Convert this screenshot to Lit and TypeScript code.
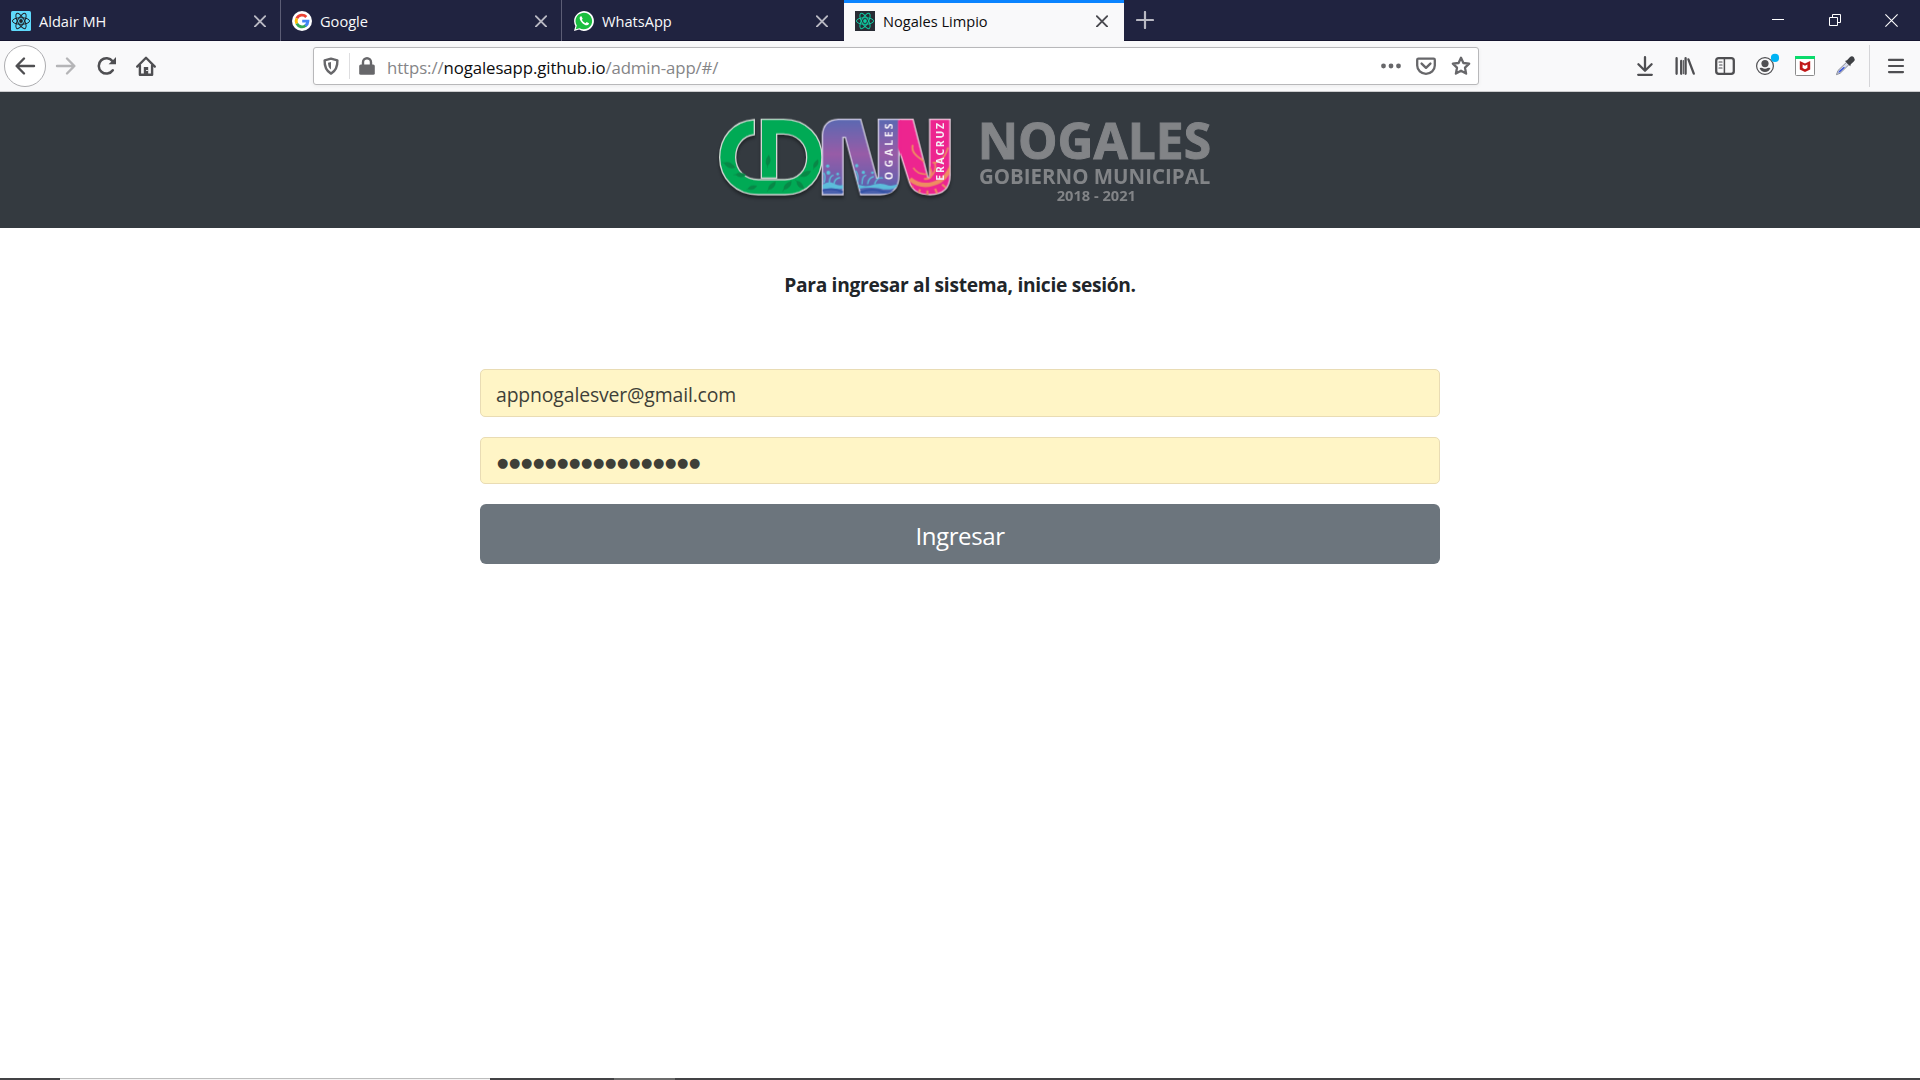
import { LitElement, html, css, svg } from "lit";
import { customElement, property } from "lit/decorators.js";

const atom = (color: string, bg: string, radius: number) => svg`
  <rect width="20" height="20" rx=${radius} fill=${bg}></rect>
  <g fill="none" stroke=${color} stroke-width="1">
    <ellipse cx="10" cy="10" rx="8.6" ry="3.3"></ellipse>
    <ellipse cx="10" cy="10" rx="8.6" ry="3.3" transform="rotate(60 10 10)"></ellipse>
    <ellipse cx="10" cy="10" rx="8.6" ry="3.3" transform="rotate(120 10 10)"></ellipse>
  </g>
  <circle cx="10" cy="10" r="1.9" fill=${color}></circle>`;

const favicons: Record<string, unknown> = {
  aldair: atom("#20232a", "#5fd9fb", 1.5),
  nogales: atom("#0fc9a0", "#282c34", 0),
  google: svg`
    <circle cx="10" cy="10" r="10" fill="#fff"></circle>
    <g fill="none" stroke-width="2.9">
      <path d="M14.3 5.9 A5.9 5.9 0 0 0 4.8 7.3" stroke="#ea4335"></path>
      <path d="M4.8 7.3 A5.9 5.9 0 0 0 4.8 12.7" stroke="#fbbc05"></path>
      <path d="M4.8 12.7 A5.9 5.9 0 0 0 13.8 14.5" stroke="#34a853"></path>
      <path d="M10.2 10.1 H15.9 A5.9 5.9 0 0 1 13.4 14.8" stroke="#4285f4"></path>
    </g>`,
  whatsapp: svg`
    <path d="M0 20 L1.4 14.9 A9.9 9.9 0 1 1 5.1 18.6 Z" fill="#fff"></path>
    <path d="M1.7 18.3 L2.8 14.5 A8.3 8.3 0 1 1 5.6 17.2 Z" fill="#1bbf3f"></path>
    <path d="M7.6 5.4 C7 5 6 5.6 5.7 6.7 C5.2 9.3 9.5 14.3 13 14.3 C14.2 14.2 15.1 13.3 15 12.3 L12.7 11 L11.5 12.2 C9.8 11.5 8.5 10.2 7.9 8.8 L8.7 7.7 Z" fill="#fff"></path>`,
};

const icons: Record<string, unknown> = {
  back: svg`<path d="M19 10 H1.8 M9 2.5 L1.6 10 L9 17.5" stroke-width="2.4"></path>`,
  forward: svg`<path d="M1 10 H18.2 M11 2.5 L18.4 10 L11 17.5" stroke-width="2.4"></path>`,
  reload: svg`<path d="M15.8 14.2 A7.7 7.7 0 1 1 15.6 5.2" stroke-width="2.5"></path>
    <path d="M19 1 V8.2 H11.6 L15 5 L17.6 2.4 Z" fill="currentColor" stroke="none"></path>`,
  home: svg`<path d="M1.2 10.6 L10 1.8 L18.8 10.6" stroke-width="2.3"></path>
    <path d="M3.9 9.5 V18.7 H16.1 V9.5" stroke-width="2.4"></path>
    <path d="M7.8 18 V11 H12.2 V18 Z" fill="currentColor" stroke="none"></path><path d="M10.6 14.5 h.8" stroke="#f9f9fa" stroke-width="1.2"></path>`,
  shield: svg`<path d="M10 2.6 L16.4 4.3 C16.6 10.8 14.8 15 10 17.6 C5.2 15 3.4 10.8 3.6 4.3 Z" stroke-width="2.4"></path>
    <path d="M10 6 V13.6 C7.8 12 7 9.6 7 6.7 Z" fill="currentColor" stroke="none"></path>`,
  lock: svg`<path d="M6 9 V6.3 a4 4 0 0 1 8 0 V9" stroke-width="2.4"></path>
    <rect x="2.2" y="8.4" width="15.6" height="10.4" rx="1.6" fill="currentColor" stroke="none"></rect>`,
  dots: svg`<g fill="currentColor" stroke="none"><circle cx="2.5" cy="10" r="2.4"></circle><circle cx="10" cy="10" r="2.4"></circle><circle cx="17.5" cy="10" r="2.4"></circle></g>`,
  pocket: svg`<path d="M2.4 2.6 H17.6 a1.2 1.2 0 0 1 1.2 1.2 V9.5 a8.8 8.3 0 0 1 -17.6 0 V3.8 a1.2 1.2 0 0 1 1.2 -1.2 Z" stroke-width="2.3"></path>
    <path d="M5.6 7.6 L10 11.8 L14.4 7.6" stroke-width="2.4"></path>`,
  star: svg`<path d="M10 1.8 L12.4 7 L18.2 7.7 L14 11.7 L15.1 17.6 L10 14.7 L4.9 17.6 L6 11.7 L1.8 7.7 L7.6 7 Z" stroke-width="2.3"></path>`,
  download: svg`<path d="M10 1.2 V14.4 M3.4 8.2 L10 14.8 L16.6 8.2 M3.2 18.8 H16.8" stroke-width="2.3"></path>`,
  library: svg`<path d="M1.6 2.2 V17.8 M6.2 5 V17.8 M10.6 2.2 V17.8 M13.4 3.4 L18.8 17.6" stroke-width="2.3"></path><path d="M8.4 4.5 V17.8" stroke-width="1"></path>`,
  sidebar: svg`<rect x="1.2" y="2.2" width="17.6" height="15.6" rx="2.6" stroke-width="2.3"></rect>
    <path d="M9.4 2.5 V17.5" stroke-width="1.5"></path><path d="M4 6 H7 M4.6 9 H7 M4 12 H7" stroke-width="1.2"></path>`,
  account: svg`<circle cx="10" cy="10" r="8.4" stroke-width="1.2"></circle>
    <g fill="currentColor" stroke="none"><circle cx="10" cy="7.6" r="3.6"></circle><path d="M4.6 12 Q7 11.2 8 12.2 Q10 13.4 12 12.2 Q13 11.2 15.4 12 Q14 16 10 16 Q6 16 4.6 12 Z"></path></g>
    <circle cx="20" cy="1.9" r="4.1" fill="#00b3f4" stroke="none"></circle>`,
  mcafee: svg`<rect x=".5" y=".5" width="19" height="19" rx="1" fill="#fff" stroke="#8c8c8c" stroke-width="1"></rect>
    <rect width="20" height="3" fill="#0bdb6c" stroke="none"></rect>
    <path d="M4.8 5 L10 7.6 L15.2 5 V13.4 L10 16 L4.8 13.4 Z" stroke="none" fill="#c01818"></path><path d="M7.6 8.6 L10 9.8 L12.4 8.6 V12.1 L10 13.3 L7.6 12.1 Z" stroke="none" fill="#fff"></path>`,
  dropper: svg`<path d="M1.6 18.3 L3 14.5 L11.5 6.3 L13.9 8.7 L5.4 17 Z" fill="#d5d9e8" stroke="#8a8d98" stroke-width="1"></path>
    <path d="M3.2 16.8 L4 14.9 L8.6 11 L10 11.6 L5 16.2 Z" fill="#3553d8" stroke="none"></path>
    <path d="M10 5 L12 4.3 L14.8 1.3 Q17 -.6 19 1.4 Q20.6 3.6 18.8 5.6 L15.8 8.2 L15.2 10.2 Z" fill="#3f4145" stroke="none"></path>`,
  menu: svg`<path d="M3 3.9 H17 M3 10 H17 M3 16.1 H17" stroke-width="2.2"></path>`,
};

@customElement("nav-icon")
class NavIcon extends LitElement {
  @property() name = "";
  static styles = css`
    :host { display: block; width: 20px; height: 20px; flex: none; }
    .icon { display: block; overflow: visible; fill: none; stroke: currentColor; stroke-linecap: round; stroke-linejoin: round; }
  `;
  render() {
    return html`<svg class="icon" width="20" height="20" viewBox="0 0 20 20">${icons[this.name]}</svg>`;
  }
}

@customElement("browser-tab")
class BrowserTab extends LitElement {
  @property() icon = "";
  @property() label = "";
  static styles = css`
    :host { display: flex; box-sizing: border-box; align-items: center; width: 281px; height: 41px; padding: 1px 14px 0 11px; color: #f9f9fa; border-right: 1px solid #5c5d75; border-bottom: 0; font: 14.6px "Open Sans", sans-serif; letter-spacing: 0; }
    :host([last]) { border-right-color: transparent; width: 282px; padding: 1px 15px 0 12px; }
    :host([active]) { color: #0c0c0d; background: #f9f9fa; box-shadow: inset 0 3px #0a84ff; border-right: 0; width: 280px; padding-right: 16px; }
    .fav { display: block; flex: none; }
    .label { flex: 1; padding: 0 0 1px 8px; line-height: 20px; white-space: nowrap; }
    .x { display: block; color: #b9b9c3; }
    :host([active]) .x { color: #4a4a4f; }
  `;
  render() {
    return html`<svg class="fav" width="20" height="20" viewBox="0 0 20 20">${favicons[this.icon]}</svg>
      <span class="label">${this.label}</span>
      <svg class="x" width="12" height="12" viewBox="0 0 12 12"><path d="M.8 1.2 L11.2 11.6 M11.2 1.2 L.8 11.6" stroke="currentColor" stroke-width="1.9" stroke-linecap="round"></path></svg>`;
  }
}

@customElement("nogales-logo")
class NogalesLogo extends LitElement {
  static styles = css`
    :host { display: block; width: 540px; height: 136px; }
    .logo { display: block; }
    .words { font-family: "Open Sans", sans-serif; font-weight: 700; fill: #828487; }
    .side { font-family: "Open Sans", sans-serif; font-weight: 700; fill: #f4eef6; font-size: 31px; }
    .name { stroke: #828487; stroke-width: 3; }
    .shadow { filter: drop-shadow(0 8px 5px rgba(0, 0, 0, 0.4)); }
  `;
  render() {
    const leaf = (x: number, y: number, r: number, s = 1) => svg`<path transform="translate(${x} ${y}) rotate(${r}) scale(${s})" d="M-19 0 Q-5 -15 20 -2 Q2 15 -19 0 Z M-19 0 L-27 2"></path>`;
    return html`<svg class="logo" width="540" height="136" viewBox="0 -9 1620 408">
      <defs>
        <linearGradient id="violet" x1="0" y1="73" x2="0" y2="299" gradientUnits="userSpaceOnUse">
          <stop offset="0" stop-color="#5b69b2"></stop><stop offset=".46" stop-color="#985ca7"></stop><stop offset=".8" stop-color="#6e60ad"></stop><stop offset="1" stop-color="#4361ae"></stop>
        </linearGradient>
        <clipPath id="nClip"><path d="M367 299 V120 Q370 75 415 73 H482 L530 249 H535 V73 H597 V240 Q597 299 540 299 H482 L436 127 H429 V299 Z"></path></clipPath>
        <clipPath id="vClip"><path d="M597 73 H639 L684 249 H689 V73 H750 V240 Q750 299 690 299 Q640 299 628 262 L597 163 Z"></path></clipPath>
      </defs>
      <g class="shadow">
        <path d="M163 74 C98 78 59 128 59 187 C59 250 107 299 175 299 H255 C322 299 366 250 366 187 C366 122 320 73 250 73 H184 V249 H230 V117 H250 C290 117 320 145 320 187 C320 225 294 254 255 254 H175 C135 254 107 225 107 187 C107 150 130 122 163 119 Z" fill="#00aa55" stroke="#d3d9d5" stroke-width="4"></path>
        <g fill="#098747" stroke="#098747" stroke-width="2">
          ${leaf(88, 211, 25, .9)}${leaf(122, 240, 5, .8)}${leaf(157, 278, -15, .7)}${leaf(205, 197, -80, .8)}${leaf(216, 273, -45, .8)}${leaf(263, 272, -45, .85)}${leaf(300, 270, 50, .8)}${leaf(317, 237, -25, .85)}${leaf(348, 207, -60, .7)}
        </g>
        <path d="M597 73 H639 L684 249 H689 V73 H750 V240 Q750 299 690 299 Q640 299 628 262 L597 163 Z" fill="#ed258f" stroke="#eed3e1" stroke-width="4"></path>
        <g clip-path="url(#vClip)" fill="none" stroke="#ee8c62">
          <path d="M630 252 Q668 284 720 258 Q742 243 755 212" stroke-width="13"></path>
          <path d="M638 150 C630 185 676 190 690 220 Q704 252 672 252" stroke-width="6"></path>
          <path d="M697 203 Q730 205 744 157 M690 246 Q712 228 704 202 M690 238 Q650 240 640 218" stroke-width="5"></path>
          <path d="M638 273 l-9 12 M660 283 l-5 14 M682 286 v14 M705 281 l6 14 M726 268 l12 10" stroke-width="6"></path>
        </g>
        <path d="M367 299 V120 Q370 75 415 73 H482 L530 249 H535 V73 H597 V240 Q597 299 540 299 H482 L436 127 H429 V299 Z" fill="url(#violet)" stroke="#d6d1e5" stroke-width="4"></path>
        <path d="M594 75.500 H603 V185 L594 158 Z" fill="#ed258f"></path>
        <g clip-path="url(#nClip)">
          <path d="M367 270 Q384 256 401 265 Q420 275 430 268 V281 Q400 286 367 281 Z M466 260 Q479 277 510 272 Q540 260 565 271 Q585 275 600 262 V272 Q570 290 538 280 Q510 275 473 282 Z" fill="#5cbddb"></path>
          <path d="M367 287 Q400 276 430 292 M478 293 Q515 277 548 290 Q573 296 597 284" fill="none" stroke="#3452a5" stroke-width="6"></path>
          <path d="M372 262 Q378 244 371 234 M388 262 Q388 245 399 241 M402 265 Q405 250 419 248 M472 262 Q477 240 467 228 M486 266 Q486 244 497 241 M503 266 Q506 248 520 245 M524 266 Q532 246 547 249" fill="none" stroke="#5ac5dd" stroke-width="4" stroke-linecap="round"></path>
          <g fill="#5ac5dd"><circle cx="383" cy="213" r="5"></circle><circle cx="385" cy="233" r="6"></circle><circle cx="470" cy="212" r="5"></circle><circle cx="490" cy="232" r="5"></circle><circle cx="517" cy="233" r="4"></circle><circle cx="413" cy="237" r="4"></circle></g>
        </g>
      </g>
      <text class="side" transform="translate(578 255) rotate(-90)" x="0 38 72 103 128 152">OGALES</text>
      <text class="side" transform="translate(731 257) rotate(-90)" textLength="173">ERACRUZ</text>
      <g class="words">
        <text class="name" x="833" y="192" font-size="150" textLength="700" lengthAdjust="spacingAndGlyphs">NOGALES</text>
        <text x="837" y="267" font-size="66" textLength="694" lengthAdjust="spacingAndGlyphs">GOBIERNO MUNICIPAL</text>
        <text x="1070" y="317" font-size="44" textLength="238" lengthAdjust="spacingAndGlyphs">2018 - 2021</text>
      </g>
    </svg>`;
  }
}

@customElement("app-root")
class AppRoot extends LitElement {
  static styles = css`
    :host { display: flex; flex-direction: column; width: 1920px; height: 1080px; overflow: hidden; background: #fff; font-family: "Open Sans", sans-serif; }
    .tabs { display: flex; height: 41px; flex: none; background: linear-gradient(#202340 40px, #15152f 40px); }
    .plus { display: block; margin: 11px 0 0 12px; }
    .window { display: flex; margin-left: auto; padding: 14px 22px 0 0; gap: 44px; }
    .minimize { margin-right: 1px; }
    .toolbar { display: flex; box-sizing: border-box; align-items: center; height: 51px; flex: none; background: #f9f9fa; border-bottom: 1px solid #ccccce; color: #4f4f52; padding: 0 14px 0 4px; }
    .round { box-sizing: border-box; width: 42px; height: 42px; border: 1px solid #adadb0; border-radius: 50%; background: #fff; display: grid; place-items: center; }
    .nav { display: flex; align-items: center; gap: 20px; width: 309px; }
    .off { color: #b5b5b7; margin: 0 1px 0 -10px; }
    .home { margin-left: -1px; }
    .url { display: flex; align-items: center; box-sizing: border-box; width: 1166px; height: 38px; background: #fff; border: 1px solid #b8b8ba; border-radius: 3px; box-shadow: 0 1px 4px rgba(0, 0, 0, 0.06); padding: 0 7px 0 7px; color: #67676a; }
    .bar { width: 1px; height: 26px; background: #dedee0; margin: 0 7px 0 8px; }
    .address { flex: 1; padding: 3px 0 0 10px; font-size: 16.8px; line-height: 24px; color: #858587; white-space: nowrap; letter-spacing: -0.09px; }
    .host { color: #0c0c0d; }
    .page-actions { display: flex; gap: 15px; }
    .tools { display: flex; align-items: center; gap: 20px; margin-left: auto; }
    .divider { width: 1px; height: 42px; background: #d5d5d8; margin: 0 -4px 0 -6px; }
    .banner { display: flex; justify-content: center; height: 136px; flex: none; background: #343a40; padding-left: 20px; }
    .login { display: flex; flex-direction: column; width: 960px; margin: 0 auto; flex: 1; color: #212529; }
    .title { margin: 42px 0 69px; font-size: 19.2px; line-height: 30px; font-weight: 700; text-align: center; letter-spacing: -0.3px; }
    .field { box-sizing: border-box; width: 960px; border: 1px solid #e9dcb4; border-radius: 5px; background: #fff5c6; padding: 2px 15px 0; font-size: 19.4px; letter-spacing: -0.14px; color: #3e3f38; margin-bottom: 20px; outline: 0; font-family: inherit; }
    .mail { height: 48px; }
    .secret { height: 47px; font-family: "DejaVu Sans", sans-serif; font-size: 13px; letter-spacing: 0.65px; padding: 4px 15px 0 16px; }
    .submit { height: 60px; border: 0; border-radius: 6px; background: #6c757d; color: #fff; font-family: inherit; font-size: 24px; letter-spacing: -0.4px; padding: 2px 0 0; }
    .taskbar { display: flex; height: 2px; flex: none; background: #434345; }
    .light { box-sizing: border-box; width: 430px; margin-left: 60px; background: #f4f4f4; border-top: 1px solid #bdbdbd; }
    .mid { width: 61px; margin-left: 124px; background: #6b6b6b; }
  `;
  render() {
    const tools = ["download", "library", "sidebar", "account", "mcafee", "dropper"];
    return html`
      <div class="tabs">
        <browser-tab icon="aldair" label="Aldair MH"></browser-tab>
        <browser-tab icon="google" label="Google"></browser-tab>
        <browser-tab icon="whatsapp" label="WhatsApp" last></browser-tab>
        <browser-tab icon="nogales" label="Nogales Limpio" active></browser-tab>
        <svg class="plus" width="18" height="18" viewBox="0 0 18 18"><path d="M9 1 V17 M1 9 H17" stroke="#b9b9c3" stroke-width="2.2" stroke-linecap="round"></path></svg>
        <div class="window">
          <svg class="minimize" width="12" height="13" viewBox="0 0 12 13"><path d="M0 5.5 H12" stroke="#fff"></path></svg>
          <svg width="12" height="13" viewBox="0 0 12 13"><path d="M.5 3.5 H8.5 V11.5 H.5 Z M3.5 3.5 V.5 H11.5 V8.5 H8.5" fill="none" stroke="#fff"></path></svg>
          <svg width="13" height="13" viewBox="0 0 13 13"><path d="M.4 .4 L12.6 12.6 M12.6 .4 L.4 12.6" stroke="#fff" stroke-width="1.1"></path></svg>
        </div>
      </div>
      <div class="toolbar">
        <div class="nav">
          <div class="round"><nav-icon name="back"></nav-icon></div>
          <nav-icon class="off" name="forward"></nav-icon>
          <nav-icon name="reload"></nav-icon>
          <nav-icon class="home" name="home"></nav-icon>
        </div>
        <div class="url">
          <nav-icon name="shield"></nav-icon><div class="bar"></div><nav-icon name="lock"></nav-icon>
          <div class="address">https://<span class="host">nogalesapp.github.io</span>/admin-app/#/</div>
          <div class="page-actions"><nav-icon name="dots"></nav-icon><nav-icon name="pocket"></nav-icon><nav-icon name="star"></nav-icon></div>
        </div>
        <div class="tools">
          ${tools.map((name) => html`<nav-icon name=${name}></nav-icon>`)}
          <div class="divider"></div>
          <nav-icon name="menu"></nav-icon>
        </div>
      </div>
      <header class="banner"><nogales-logo></nogales-logo></header>
      <main class="login">
        <h1 class="title">Para ingresar al sistema, inicie sesión.</h1>
        <input class="field mail" .value=${"appnogalesver@gmail.com"} />
        <input class="field secret" .value=${"●".repeat(17)} />
        <button class="submit">Ingresar</button>
      </main>
      <div class="taskbar"><div class="light"></div><div class="mid"></div></div>
    `;
  }
}
